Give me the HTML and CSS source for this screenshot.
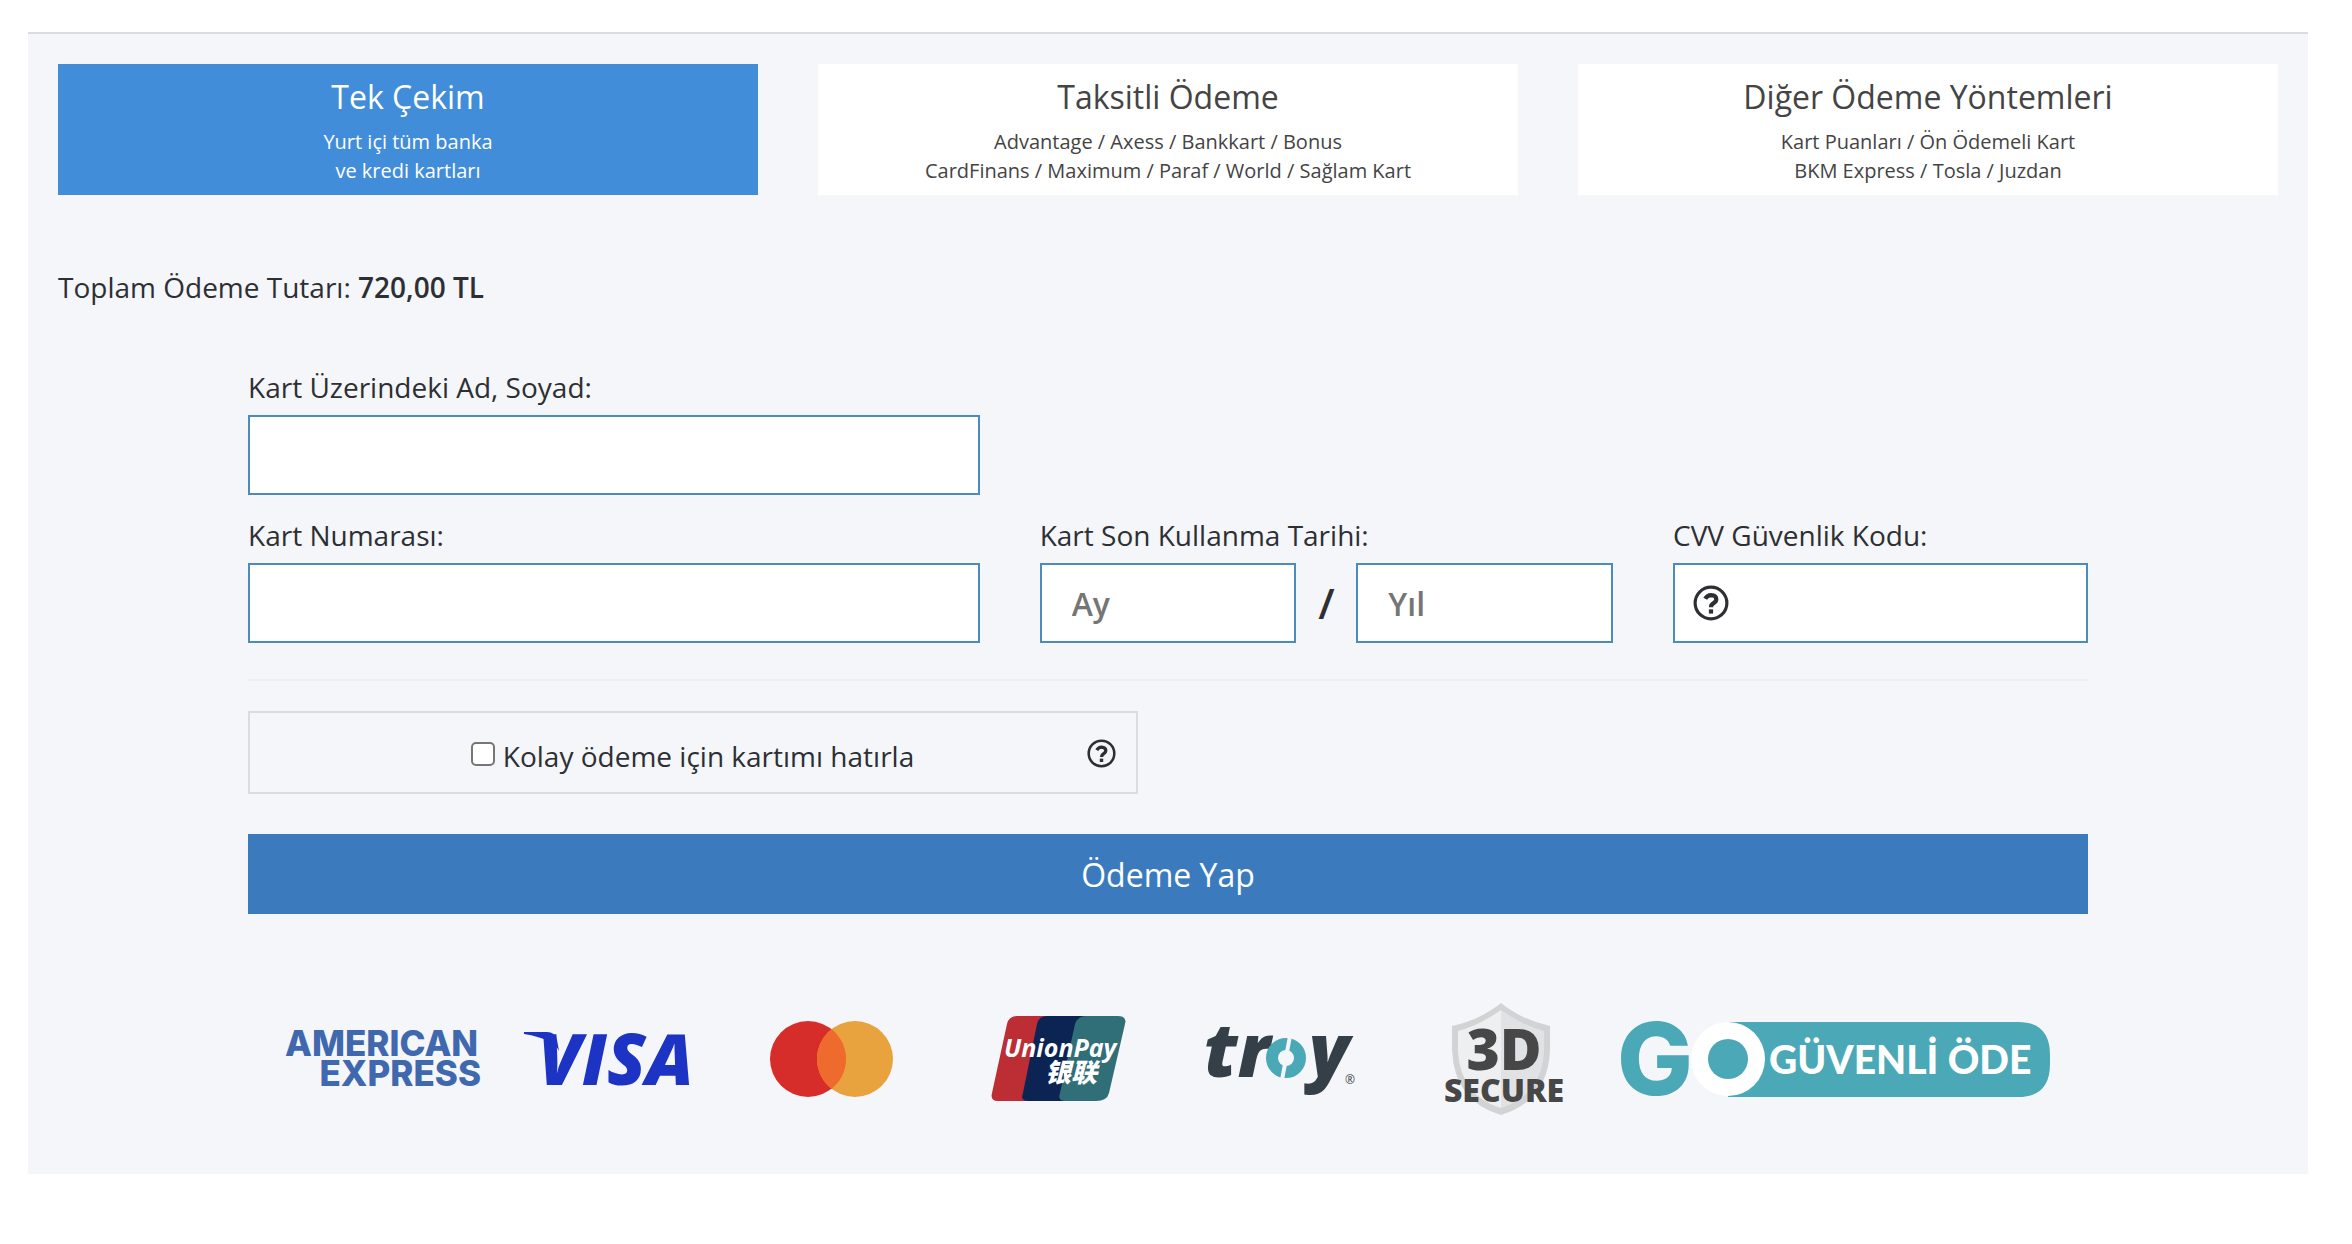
FILE: index.html
```html
<!DOCTYPE html>
<html lang="tr">
<head>
    <meta charset="UTF-8">
    <meta name="viewport" content="width=device-width, initial-scale=1.0">
    <title>Ödeme</title>
    <link rel="stylesheet" href="styles.css">
</head>
<body>
    <main class="payment">
        <div class="tabs">
            <button type="button" class="tab active">
                <span class="tab-title">Tek Çekim</span>
                <span class="tab-text">Yurt içi tüm banka<br>ve kredi kartları</span>
            </button>
            <button type="button" class="tab">
                <span class="tab-title">Taksitli Ödeme</span>
                <span class="tab-text">Advantage / Axess / Bankkart / Bonus<br>CardFinans / Maximum / Paraf / World / Sağlam Kart</span>
            </button>
            <button type="button" class="tab">
                <span class="tab-title">Diğer Ödeme Yöntemleri</span>
                <span class="tab-text">Kart Puanları / Ön Ödemeli Kart<br>BKM Express / Tosla / Juzdan</span>
            </button>
        </div>

        <p class="total">Toplam Ödeme Tutarı: <strong>720,00 TL</strong></p>

        <form class="card-form">
            <div class="fields">
                <div class="field field-name">
                    <label for="name">Kart Üzerindeki Ad, Soyad:</label>
                    <input type="text" id="name" class="input">
                </div>
                <div class="field field-number">
                    <label for="number">Kart Numarası:</label>
                    <input type="text" id="number" class="input">
                </div>
                <div class="field field-expiry">
                    <label for="month">Kart Son Kullanma Tarihi:</label>
                    <div class="expiry">
                        <input type="text" id="month" class="input" placeholder="Ay">
                        <span class="slash">/</span>
                        <input type="text" id="year" class="input" placeholder="Yıl" aria-label="Yıl">
                    </div>
                </div>
                <div class="field field-cvv">
                    <label for="cvv">CVV Güvenlik Kodu:</label>
                    <div class="cvv">
                        <input type="text" id="cvv" class="input">
                        <svg class="help" viewBox="0 0 34 34" aria-hidden="true">
                            <circle cx="17" cy="17" r="15" fill="none" stroke="currentColor" stroke-width="3"/>
                            <path d="M11.500 13Q13.500 9.500 17 9.500Q22 9.700 22 13.500Q22 15.800 19.500 17.200Q17 18.600 17 21" fill="none" stroke="currentColor" stroke-width="4"/>
                            <path d="M15 23h4v4h-4z" fill="currentColor"/>
                        </svg>
                    </div>
                </div>
            </div>

            <hr class="divider">

            <div class="remember">
                <label class="remember-label"><input type="checkbox" class="checkbox"> <span class="remember-text">Kolay ödeme için kartımı hatırla</span></label>
                <svg class="help help-small" viewBox="0 0 34 34" aria-hidden="true">
                    <circle cx="17" cy="17" r="15" fill="none" stroke="currentColor" stroke-width="3"/>
                    <path d="M11.500 13Q13.500 9.500 17 9.500Q22 9.700 22 13.500Q22 15.800 19.500 17.200Q17 18.600 17 21" fill="none" stroke="currentColor" stroke-width="4"/>
                    <path d="M15 23h4v4h-4z" fill="currentColor"/>
                </svg>
            </div>

            <button type="submit" class="pay">Ödeme Yap</button>

            <div class="logos">
                <svg class="logo logo-amex" viewBox="0 0 234 120">
                    <text x="17" y="58">AMERICAN</text>
                    <text x="213" y="88" text-anchor="end">EXPRESS</text>
                </svg>
                <svg class="logo logo-visa" viewBox="0 0 220 120">
                    <path d="M22 34h23q8 0 10 8l2 11q-5-12-35-17z"/>
                    <text x="36" y="87">VISA</text>
                </svg>
                <svg class="logo" viewBox="0 0 220 120">
                    <circle cx="86" cy="61" r="38" fill="#d72d2a"/>
                    <circle cx="133" cy="61" r="38" fill="#e8a33f"/>
                    <path d="M109.500 31.100a38 38 0 0 1 0 59.800a38 38 0 0 1 0-59.800z" fill="#ee6b2d"/>
                </svg>
                <svg class="logo logo-unionpay" viewBox="0 0 230 120">
                    <path d="M75 18h60L115 103H56q-8 0-6-8L65 26q2-8 10-8z" fill="#bc2d34"/>
                    <path d="M105 18h60L145 103H86q-8 0-5-8L95 26q2-8 10-8z" fill="#0b2453"/>
                    <path d="M144 18h32q9 0 7 8L167 95q-2 8-13 8H124q-9 0-6-8L133 26q3-8 11-8z" fill="#306f77"/>
                    <text x="62" y="59" class="union">UnionPay</text>
                    <text x="103" y="84" class="union-cn">银联</text>
                </svg>
                <svg class="logo logo-troy" viewBox="0 0 220 120">
                    <text x="32" y="79">tr</text>
                    <circle cx="114" cy="60" r="14" fill="none" stroke="#4ba9b7" stroke-width="12"/>
                    <path d="M118 38l-3 16M113 66l-3 16" stroke="#f4f6fa" stroke-width="4"/>
                    <text x="137" y="79">y</text>
                    <text x="173" y="86" class="registered">®</text>
                </svg>
                <svg class="logo logo-secure" viewBox="0 0 220 120">
                    <path d="M109 5Q130 22 158 28V52Q156 103 109 117Q62 103 60 52V28Q88 22 109 5z" fill="#d1d3d5"/>
                    <path d="M109 12Q132 28 152 33V54Q149 98 109 110z" fill="#e1e2e3"/>
                    <path d="M109 12Q86 28 66 33V54Q69 98 109 110z" fill="#eeeff0"/>
                    <text x="112" y="72" class="three-d">3D</text>
                    <text x="112" y="104" class="secure">SECURE</text>
                </svg>
                <svg class="logo logo-go" viewBox="0 0 456 120">
                    <path d="M116 24H406q32 0 32 33v9q0 33-32 33H116z" fill="#4ba9b7"/>
                    <text x="5" y="97" class="go-g">G</text>
                    <circle cx="116" cy="61" r="37" fill="#fff"/>
                    <circle cx="116" cy="61" r="20" fill="#4ba9b7"/>
                    <text x="157" y="76" class="go-text">GÜVENLİ ÖDE</text>
                </svg>
            </div>
        </form>
    </main>
</body>
</html>
```
FILE: styles.css
```css
* {
    box-sizing: border-box;
}

body {
    margin: 32px 44px 32px 28px;
    background-color: #ffffff;
    color: #2d2f33;
    font-family: 'Open Sans', sans-serif;
    font-size: 28px;
    line-height: 40px;
}

.payment {
    padding: 30px 30px 56px;
    background-color: #f4f6fa;
    border-top: 2px solid #dadce2;
}

.tabs {
    display: grid;
    grid-template-columns: repeat(3, 1fr);
    gap: 60px;
}

.tab {
    padding: 10px;
    border: 0;
    background-color: #ffffff;
    color: #444444;
    font-family: inherit;
    text-align: center;
}

.tab.active {
    background-color: #418dd9;
    color: #ffffff;
}

.tab-title {
    display: block;
    margin-bottom: 7px;
    font-size: 32px;
    line-height: 46px;
}

.tab-text {
    display: block;
    font-size: 20px;
    line-height: 29px;
}

.total {
    margin: 72px 0 60px;
}

.total strong {
    font-weight: 600;
}

.card-form {
    margin: 0 190px;
}

.fields {
    display: grid;
    grid-template-columns: repeat(12, 1fr);
    gap: 20px 60px;
}

.field label {
    display: block;
    margin-bottom: 8px;
}

.field-name {
    grid-column: 1 / span 5;
}

.field-number {
    grid-column: 1 / span 5;
}

.field-expiry {
    grid-column: span 4;
}

.field-cvv {
    grid-column: span 3;
}

.input {
    display: block;
    width: 100%;
    min-width: 0;
    height: 80px;
    padding: 0 30px;
    border: 2px solid #4c8cbc;
    border-radius: 0;
    background-color: #ffffff;
    color: #2d2f33;
    font-family: inherit;
    font-size: 32px;
    font-weight: 600;
}

.input::placeholder {
    color: #757575;
}

.expiry {
    display: flex;
    align-items: center;
}

.slash {
    flex: 0 0 60px;
    font-size: 42px;
    font-weight: 600;
    text-align: center;
}

.cvv {
    position: relative;
}

.cvv .input {
    padding-left: 76px;
}

.help {
    width: 36px;
    height: 36px;
    color: #2d2f33;
}

.cvv .help {
    position: absolute;
    left: 20px;
    top: 22px;
}

.help-small {
    width: 29px;
    height: 29px;
}

.divider {
    margin: 36px 0 30px;
    border: 0;
    border-top: 2px solid #edeff2;
}

.remember {
    display: flex;
    align-items: center;
    width: calc(50% - 30px);
    height: 83px;
    padding: 2px 20px 0 48px;
    border: 2px solid #dadce2;
}

.remember-label {
    flex: 1;
    display: flex;
    align-items: center;
    justify-content: center;
    gap: 8px;
}

.remember-text {
    padding-top: 4px;
}

.checkbox {
    appearance: none;
    width: 24px;
    height: 24px;
    margin: 0;
    border: 2px solid #767676;
    border-radius: 5px;
    background-color: #ffffff;
}

.checkbox:checked {
    background-color: #3b7bbd;
}

.pay {
    display: block;
    width: 100%;
    height: 80px;
    margin-top: 40px;
    border: 0;
    background-color: #3b7bbd;
    color: #ffffff;
    font-family: inherit;
    font-size: 32px;
}

.logos {
    display: flex;
    align-items: center;
    margin-top: 84px;
    padding: 0 20px;
}

.logo {
    flex: 220 1 0;
    min-width: 0;
}

.logo-amex {
    flex-grow: 234;
    fill: #4068ae;
    font: 800 35px 'Inter', sans-serif;
}

.logo-visa {
    fill: #1c33c4;
    font: italic 800 71px 'Open Sans', sans-serif;
}

.logo-unionpay {
    flex-grow: 230;
    fill: #ffffff;
}

.union {
    font: italic 700 25px 'Open Sans', sans-serif;
}

.union-cn {
    font: italic 900 26px 'Noto Sans CJK SC', sans-serif;
}

.logo-troy {
    fill: #343f48;
    font: italic 800 74px 'Open Sans', sans-serif;
}

.registered {
    font: 400 12px 'Open Sans', sans-serif;
}

.logo-secure {
    fill: #474747;
    text-anchor: middle;
}

.three-d {
    font: 800 57px 'Open Sans', sans-serif;
}

.secure {
    font: 800 32px 'Open Sans', sans-serif;
}

.logo-go {
    flex-grow: 456;
    fill: #ffffff;
}

.go-g {
    fill: #4ba9b7;
    font: 800 101px 'Inter', sans-serif;
}

.go-text {
    font: 900 39px 'Lato', sans-serif;
}
```
